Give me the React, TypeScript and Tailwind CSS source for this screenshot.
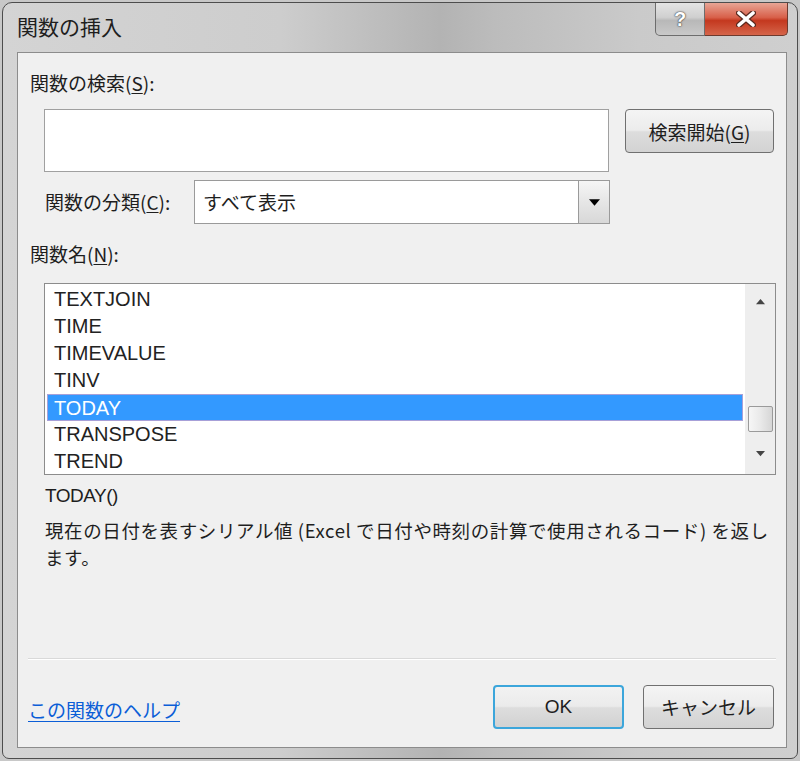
import React from 'react';

const items = ['TEXTJOIN', 'TIME', 'TIMEVALUE', 'TINV', 'TODAY', 'TRANSPOSE', 'TREND'];

const jp = 'font-["Noto_Sans_CJK_JP","Liberation_Sans",sans-serif]';

function Triangle({ dir, className }: { dir: 'up' | 'down'; className?: string }) {
  return (
    <svg width="12" height="7" viewBox="0 0 12 7" className={className}>
      {dir === 'up' ? <path d="M6 0 L12 7 L0 7 Z" fill="currentColor" /> : <path d="M0 0 L12 0 L6 7 Z" fill="currentColor" />}
    </svg>
  );
}

export default function App() {
  const selected = 'TODAY';

  return (
    <div className="w-[800px] h-[761px] bg-[#c8c8c8] p-[2px]">
      <div className="h-full flex flex-col rounded-t-[10px] rounded-b-[7px] border border-[#4d4d4d] bg-[linear-gradient(90deg,#d4d4d4_0%,#cdcdcd_35%,#b3b3b3_55%,#bcbcbc_62%,#cacaca_80%,#cfcfcf_100%)] pl-[14px] pr-[10px] pb-[10px]">
        {/* title bar */}
        <div className="h-[49px] flex items-start justify-between shrink-0">
          <div className={`${jp} text-[21px] text-[#1e1e1e] mt-[9px] leading-[28px]`}>関数の挿入</div>
          <div className="flex -mr-[1px]">
            <div className="w-[50px] h-[33px] border border-[#6d6d6d] border-t-0 rounded-bl-[5px] bg-[linear-gradient(180deg,#e4e4e4_0%,#cfcfcf_45%,#b8b8b8_55%,#c9c9c9_100%)] flex items-center justify-center">
              <span className="font-['Liberation_Sans',sans-serif] font-bold text-[20px] text-white [text-shadow:0_0_2px_#333,0_0_1px_#333]">?</span>
            </div>
            <div className="w-[83px] h-[33px] border border-[#6d3a2e] border-t-0 border-l-0 rounded-br-[5px] bg-[linear-gradient(180deg,#e8a595_0%,#d8604a_45%,#c4381f_55%,#d5654a_100%)] flex items-center justify-center">
              <svg width="20" height="16" viewBox="0 0 20 16">
                <path d="M3 2 L17 14 M17 2 L3 14" stroke="#5a2a20" strokeWidth="6" strokeLinecap="round" />
                <path d="M3 2 L17 14 M17 2 L3 14" stroke="#ffffff" strokeWidth="3.6" strokeLinecap="round" />
              </svg>
            </div>
          </div>
        </div>

        {/* client area */}
        <div className={`flex-1 flex flex-col bg-[#f0f0f0] border border-[#8c8c8c] ${jp} text-[19px] text-[#1e1e1e]`}>
          <div className="pl-[12px] mt-[16px] leading-[28px]">
            関数の検索(<span className="underline underline-offset-2">S</span>):
          </div>

          <div className="flex items-start mt-[12px] pl-[26px]">
            <div className="w-[565px] h-[63px] bg-white border border-[#a0a0a0]"></div>
            <button className="ml-[16px] w-[149px] h-[44px] rounded-[4px] border border-[#707070] bg-[linear-gradient(180deg,#f4f4f4_0%,#ececec_48%,#dddddd_52%,#d3d3d3_100%)] text-[19px] leading-none">
              検索開始(<span className="underline underline-offset-2">G</span>)
            </button>
          </div>

          <div className="flex items-center mt-[8px] pl-[27px]">
            <div className="w-[149px] leading-[28px]">
              関数の分類(<span className="underline underline-offset-2">C</span>):
            </div>
            <div className="w-[416px] h-[44px] bg-white border border-[#9a9a9a] flex items-center">
              <span className="flex-1 pl-[8px] text-[19px]">すべて表示</span>
              <div className="w-[31px] h-full border-l border-[#9a9a9a] bg-[linear-gradient(180deg,#f6f6f6_0%,#e6e6e6_50%,#d8d8d8_100%)] flex items-center justify-center">
                <Triangle dir="down" className="text-black w-[11px]" />
              </div>
            </div>
          </div>

          <div className="pl-[12px] mt-[16px] leading-[28px]">
            関数名(<span className="underline underline-offset-2">N</span>):
          </div>

          <div className="ml-[26px] mt-[15px] w-[732px] h-[192px] bg-white border border-[#8c8c8c] flex">
            <div className="flex-1 pt-[2px] pl-[2px] font-['Liberation_Sans',sans-serif] text-[20px]">
              {items.map((it) => (
                <div
                  key={it}
                  className={
                    it === selected
                      ? 'h-[27px] leading-[27px] pl-[6px] bg-[#3399ff] text-white border border-[#a7a0d8] mr-[2px]'
                      : 'h-[27px] leading-[27px] pl-[7px] text-[#222]'
                  }
                >
                  {it}
                </div>
              ))}
            </div>
            <div className="w-[30px] bg-[#eeeeee] flex flex-col items-center">
              <div className="h-[34px] flex items-center justify-center text-[#444]">
                <Triangle dir="up" className="w-[9px]" />
              </div>
              <div className="h-[88px]"></div>
              <div className="w-[25px] h-[26px] rounded-[2px] border border-[#9a9a9a] bg-[linear-gradient(90deg,#f6f6f6_0%,#e9e9e9_50%,#d6d6d6_100%)]"></div>
              <div className="flex-1 flex items-center justify-center text-[#444]">
                <Triangle dir="down" className="w-[9px]" />
              </div>
            </div>
          </div>

          <div className="pl-[27px] mt-[7px] leading-[28px] font-['Liberation_Sans',sans-serif] text-[19px] tracking-[-0.5px]">TODAY()</div>
          <div className="pl-[27px] mt-[7px] leading-[27px] text-[18.5px] tracking-[0.6px] whitespace-nowrap">
            現在の日付を表すシリアル値 (Excel で日付や時刻の計算で使用されるコード) を返し
            <br />
            ます。
          </div>

          <div className="flex-1"></div>

          <div className="mx-[10px] h-[2px] border-t border-[#d9d9d9] border-b border-b-white"></div>

          <div className="flex items-center justify-between pl-[10px] pr-[12px] mt-[25px] mb-[18px]">
            <a className="text-[19px] text-[#0b5ed7] underline underline-offset-[3px] leading-none mt-[4px] cursor-pointer">この関数のヘルプ</a>
            <div className="flex gap-[19px]">
              <button className="w-[131px] h-[44px] rounded-[4px] border-2 border-[#3ca6db] bg-[linear-gradient(180deg,#f2f2f2_0%,#ebebeb_48%,#dddddd_52%,#d2d2d2_100%)] font-['Liberation_Sans',sans-serif] text-[19px]">
                OK
              </button>
              <button className="w-[131px] h-[44px] rounded-[4px] border border-[#707070] bg-[linear-gradient(180deg,#f4f4f4_0%,#ececec_48%,#dddddd_52%,#d3d3d3_100%)] text-[19px]">
                キャンセル
              </button>
            </div>
          </div>
        </div>
      </div>
    </div>
  );
}
